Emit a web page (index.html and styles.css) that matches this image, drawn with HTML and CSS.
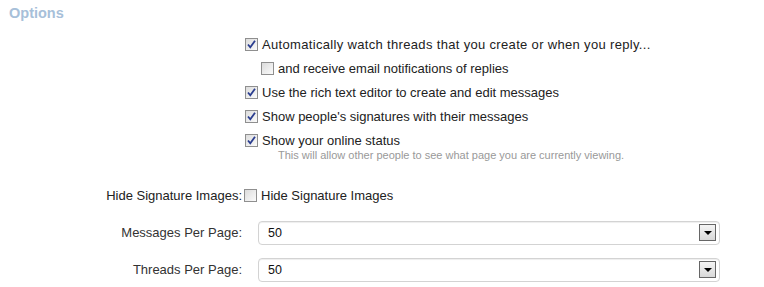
FILE: index.html
```html
<!DOCTYPE html>
<html>
<head>
  <title>Options</title>
  <meta name="viewport" content="width=device-width, initial-scale=1.0">
  <link rel="stylesheet" href="styles.css">
</head>
<body>
  <h3 class="section-title">Options</h3>

  <div class="form-row">
    <div class="label"></div>
    <div class="field">
      <div class="check wide"><span class="box on"><svg viewBox="0 0 11 11"><path d="M2 5.5 L4.3 8.3 L9 1.8" /></svg></span>Automatically watch threads that you create or when you reply...</div>
      <div class="check sub"><span class="box"></span>and receive email notifications of replies</div>
      <div class="check"><span class="box on"><svg viewBox="0 0 11 11"><path d="M2 5.5 L4.3 8.3 L9 1.8" /></svg></span>Use the rich text editor to create and edit messages</div>
      <div class="check"><span class="box on"><svg viewBox="0 0 11 11"><path d="M2 5.5 L4.3 8.3 L9 1.8" /></svg></span>Show people's signatures with their messages</div>
      <div class="check"><span class="box on"><svg viewBox="0 0 11 11"><path d="M2 5.5 L4.3 8.3 L9 1.8" /></svg></span>Show your online status</div>
      <p class="hint">This will allow other people to see what page you are currently viewing.</p>
    </div>
  </div>

  <div class="form-row sig-row">
    <div class="label">Hide Signature Images:</div>
    <div class="field">
      <div class="check tight"><span class="box"></span>Hide Signature Images</div>
    </div>
  </div>

  <div class="form-row select-row">
    <div class="label">Messages Per Page:</div>
    <div class="field">
      <div class="select">50<span class="arrow"></span></div>
    </div>
  </div>

  <div class="form-row select-row">
    <div class="label">Threads Per Page:</div>
    <div class="field">
      <div class="select">50<span class="arrow"></span></div>
    </div>
  </div>
</body>
</html>
```

FILE: styles.css
```css
body {
  margin: 0;
  padding: 0;
  font-family: "Liberation Sans", Arial, sans-serif;
  font-size: 13px;
  color: #222;
  background: #fff;
}

.section-title {
  margin: 0;
  padding: 5px 9px 0;
  font-size: 14.5px;
  font-weight: bold;
  color: #a7c0d9;
  height: 32px;
  box-sizing: border-box;
}

.form-row {
  display: flex;
}

.label {
  width: 242px;
  text-align: right;
  flex-shrink: 0;
}

.field {
  flex: 1;
}

.check {
  display: flex;
  align-items: center;
  height: 24px;
  padding-left: 3px;
}

.check.wide {
  letter-spacing: 0.33px;
}

.check.sub {
  padding-left: 19px;
}

.check.tight {
  padding-left: 2px;
}

.box {
  width: 11px;
  height: 11px;
  border: 1px solid #8f8f8f;
  background: linear-gradient(135deg, #dcdcdc, #fbfbfb);
  margin-right: 4px;
  display: inline-block;
  position: relative;
  flex-shrink: 0;
}

.box svg {
  width: 11px;
  height: 11px;
  display: block;
}

.box svg path {
  fill: none;
  stroke: #2a3d8f;
  stroke-width: 1.8;
}

.hint {
  margin: -3px 0 0 36px;
  font-size: 11px;
  color: #999;
  height: 22px;
}

.sig-row {
  margin-top: 12px;
  align-items: center;
  height: 24px;
}

.select-row {
  align-items: center;
  height: 37px;
}

.sig-row + .select-row {
  margin-top: 7px;
}

.select-row .label {
  color: #333;
}

.select-row .field {
  padding-left: 16px;
}

.select {
  width: 462px;
  height: 24px;
  box-sizing: border-box;
  border: 1px solid #d3d3d3;
  border-radius: 4px;
  display: flex;
  align-items: center;
  padding-left: 9px;
  font-size: 12.5px;
  color: #111;
  box-shadow: inset 0 1px 1px #eee;
}

.arrow {
  margin-left: auto;
  margin-right: 3px;
  width: 15px;
  height: 15px;
  border: 1px solid #666;
  background: linear-gradient(#f4f4f4, #d8d8d8);
  display: flex;
  align-items: center;
  justify-content: center;
}

.arrow::after {
  content: "";
  border-left: 4px solid transparent;
  border-right: 4px solid transparent;
  border-top: 4px solid #000;
}
```
